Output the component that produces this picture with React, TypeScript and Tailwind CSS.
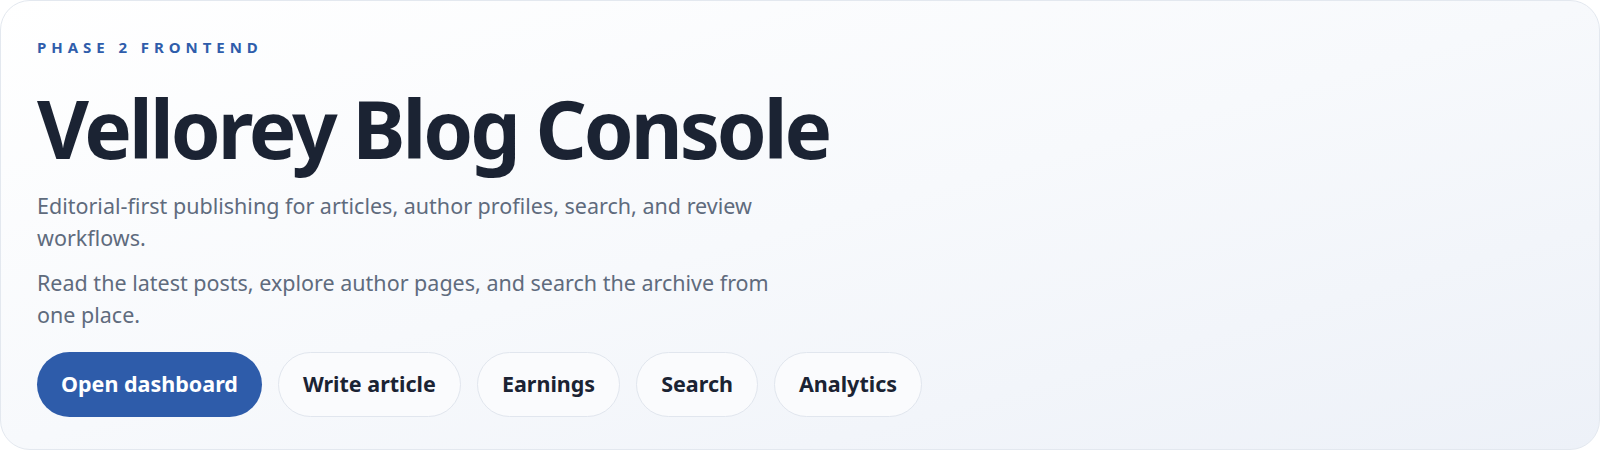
import React from "react";

export default function App() {
  const secondary = ["Write article", "Earnings", "Search", "Analytics"];
  return (
    <div className="w-[1600px] h-[451px] bg-white overflow-hidden" style={{ fontFamily: '"Noto Sans", "Open Sans", sans-serif' }}>
      <section className="h-[450px] w-[1600px] rounded-[30px] border border-[#e3e8ef] bg-gradient-to-br from-[#ffffff] via-[#f7f9fc] to-[#edf1f8] pl-[36px] pt-[36px] pr-[36px]">
        <div className="text-[15px] font-bold tracking-[0.33em] text-[#2f5dab] leading-[20px]">PHASE 2 FRONTEND</div>
        <h1 className="mt-[27px] text-[80px] font-bold leading-[88px] tracking-[-0.038em] text-[#1b2333]">Vellorey Blog Console</h1>
        <p className="mt-[18px] max-w-[775px] text-[21.5px] leading-[32px] text-[#5f6b7d]">
          Editorial-first publishing for articles, author profiles, search, and review workflows.
        </p>
        <p className="mt-[13px] max-w-[775px] text-[21.5px] leading-[32px] text-[#5f6b7d]">
          Read the latest posts, explore author pages, and search the archive from one place.
        </p>
        <div className="mt-[21px] flex gap-[16px]">
          <button className="h-[65px] rounded-full bg-[#2e5caa] px-[24px] text-[21.5px] font-bold text-white">Open dashboard</button>
          {secondary.map((s) => (
            <button key={s} className="h-[65px] rounded-full border border-[#e1e6ee] bg-[#fafbfd] px-[24px] text-[21.5px] font-bold text-[#1b2333]">{s}</button>
          ))}
        </div>
      </section>
    </div>
  );
}
